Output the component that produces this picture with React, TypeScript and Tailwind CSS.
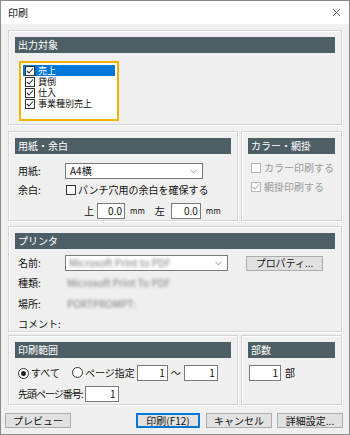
import { ChevronDown, X } from "lucide-react"
import { ReactNode } from "react"

const font = { fontFamily: '"Noto Sans CJK JP", "Noto Sans", sans-serif' }

function Group({ title, className, children }: { title: string, className?: string, children?: ReactNode }) {
    return (
        <div className={`border border-[#d5d5d5] shadow-[inset_1px_1px_0_#fff,1px_1px_0_#fff] px-[6px] pt-[6px] flex flex-col ${className ?? ''}`}>
            <div className="h-[16px] bg-[#4d5e65] text-white flex items-center px-[3px] shrink-0">{title}</div>
            {children}
        </div>
    )
}

function Check({ checked, disabled }: { checked?: boolean, disabled?: boolean }) {
    const c = disabled ? '#b5b5b5' : '#333'
    return (
        <span className="inline-flex w-[10px] h-[10px] border items-center justify-center shrink-0 bg-white" style={{ borderColor: c }}>
            {checked && (
                <svg width="8" height="8" viewBox="0 0 8 8">
                    <path d="M1 4 L3 6 L7 1.5" stroke={c} strokeWidth="1.1" fill="none" />
                </svg>
            )}
        </span>
    )
}

function Radio({ checked }: { checked?: boolean }) {
    return (
        <span className="inline-flex w-[11px] h-[11px] rounded-full border border-[#333] bg-white items-center justify-center shrink-0">
            {checked && <span className="w-[5px] h-[5px] rounded-full bg-[#222]" />}
        </span>
    )
}

function Field({ value, className }: { value: string, className?: string }) {
    return (
        <div className={`h-[16px] bg-white border border-[#7a7a7a] flex items-center justify-end pr-[2px] shrink-0 ${className ?? ''}`}>{value}</div>
    )
}

function Btn({ label, primary, className }: { label: string, primary?: boolean, className?: string }) {
    return (
        <button className={`h-[15px] bg-[#e1e1e1] flex items-center justify-center ${primary ? 'border-2 border-[#0078d7]' : 'border border-[#adadad]'} ${className ?? ''}`}>
            {label}
        </button>
    )
}

function Blur({ text }: { text: string }) {
    return <span className="text-[#7a7a7a] blur-[1.4px]">{text}</span>
}

export default function App() {
    const items = ['売上', '貸倒', '仕入', '事業種別売上']

    return (
        <div style={font} className="w-[350px] h-[435px] bg-[#f0f0f0] border border-[#8c8c8c] flex flex-col text-[10px] text-[#111] leading-none overflow-hidden">
            <div className="h-[23px] bg-white flex items-center justify-between pl-[7px] pr-[6px] shrink-0">
                <span className="text-[10px]">印刷</span>
                <X size={13} strokeWidth={1.2} />
            </div>

            <div className="flex flex-col px-[7px] pt-[6px] gap-[6px]">
                <Group title="出力対象" className="h-[95px]">
                    <div className="mt-[8px] ml-[4px] w-[100px] h-[60px] border-2 border-[#f2b400] bg-white px-[2px] pt-[2px] flex flex-col text-[9px]">
                        {items.map((item, i) => (
                            <div key={item} className={`h-[11px] flex items-center gap-[3px] pl-[2px] ${i === 0 ? 'bg-[#0078d7] text-white' : ''}`}>
                                <Check checked />
                                <span className="leading-[11px]">{item}</span>
                            </div>
                        ))}
                    </div>
                </Group>

                <div className="flex gap-[3px] h-[90px]">
                    <Group title="用紙・余白" className="w-[230px]">
                        <div className="mt-[9px] flex items-center">
                            <span className="w-[50px] pl-[3px]">用紙:</span>
                            <div className="w-[138px] h-[16px] bg-white border border-[#7a7a7a] flex items-center justify-between pl-[4px] pr-[3px]">
                                <span>A4横</span>
                                <ChevronDown size={11} strokeWidth={1.3} color="#555" />
                            </div>
                        </div>
                        <div className="mt-[6px] flex items-center">
                            <span className="w-[51px] pl-[3px]">余白:</span>
                            <Check />
                            <span className="ml-[2px]">パンチ穴用の余白を確保する</span>
                        </div>
                        <div className="mt-[8px] flex items-center">
                            <span className="ml-[69px] w-[12px]">上</span>
                            <Field value="0.0" className="w-[28px] ml-[1px]" />
                            <span className="ml-[5px] text-[8px]">mm</span>
                            <span className="ml-[10px]">左</span>
                            <Field value="0.0" className="w-[30px] ml-[6px]" />
                            <span className="ml-[5px] text-[8px]">mm</span>
                        </div>
                    </Group>
                    <Group title="カラー・網掛" className="flex-1 text-[#9a9a9a]">
                        <div className="mt-[9px] flex items-center gap-[3px] pl-[3px]">
                            <Check disabled />
                            <span>カラー印刷する</span>
                        </div>
                        <div className="mt-[9px] flex items-center gap-[3px] pl-[3px]">
                            <Check checked disabled />
                            <span>網掛印刷する</span>
                        </div>
                    </Group>
                </div>

                <Group title="プリンタ" className="h-[106px] -mt-[1px]">
                    <div className="mt-[6px] flex items-center">
                        <span className="w-[50px] pl-[3px]">名前:</span>
                        <div className="w-[163px] h-[16px] bg-white border border-[#7a7a7a] flex items-center justify-between pl-[3px] pr-[3px]">
                            <Blur text="Microsoft Print to PDF" />
                            <ChevronDown size={11} strokeWidth={1.3} color="#555" />
                        </div>
                        <Btn label="プロパティ..." className="ml-[18px] w-[77px]" />
                    </div>
                    <div className="mt-[7px] flex items-center">
                        <span className="w-[52px] pl-[3px]">種類:</span>
                        <Blur text="Microsoft Print To PDF" />
                    </div>
                    <div className="mt-[11px] flex items-center">
                        <span className="w-[52px] pl-[3px]">場所:</span>
                        <Blur text="PORTPROMPT:" />
                    </div>
                    <div className="mt-[10px] flex items-center">
                        <span className="pl-[3px]">コメント:</span>
                    </div>
                </Group>

                <div className="flex gap-[3px] h-[70px] -mt-[3px]">
                    <Group title="印刷範囲" className="w-[230px]">
                        <div className="mt-[7px] flex items-center">
                            <span className="ml-[3px]"><Radio checked /></span>
                            <span className="ml-[2px]">すべて</span>
                            <span className="ml-[12px]"><Radio /></span>
                            <span className="ml-[2px]">ページ指定</span>
                            <Field value="1" className="w-[31px] ml-[2px]" />
                            <span className="ml-[3px]">～</span>
                            <Field value="1" className="w-[34px] ml-[3px]" />
                        </div>
                        <div className="mt-[5px] flex items-center">
                            <span className="pl-[3px] whitespace-nowrap tracking-[-1px]">先頭ページ番号:</span>
                            <Field value="1" className="w-[34px] ml-[2px]" />
                        </div>
                    </Group>
                    <Group title="部数" className="flex-1">
                        <div className="mt-[7px] flex items-center">
                            <Field value="1" className="w-[32px] ml-[1px]" />
                            <span className="ml-[4px]">部</span>
                        </div>
                    </Group>
                </div>

                <div className="flex items-center mt-[2px] -mx-[3px]">
                    <Btn label="プレビュー" className="w-[66px]" />
                    <Btn label="印刷(F12)" primary className="w-[64px] ml-[65px]" />
                    <Btn label="キャンセル" className="w-[66px] ml-[6px]" />
                    <Btn label="詳細設定..." className="w-[66px] ml-[5px]" />
                </div>
            </div>
        </div>
    )
}
